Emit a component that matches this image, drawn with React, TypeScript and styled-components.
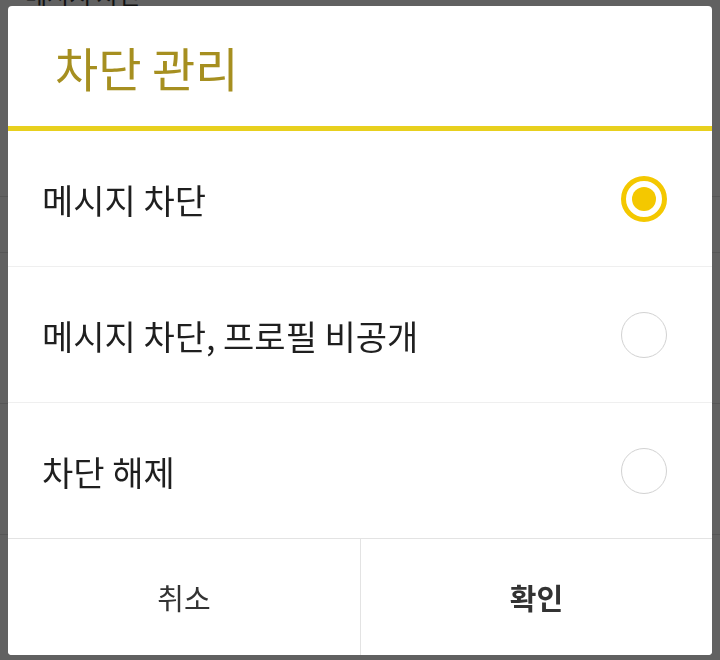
import React, { useState } from "react";
import styled, { createGlobalStyle } from "styled-components";

const GlobalStyle = createGlobalStyle`
  html, body {
    margin: 0;
    padding: 0;
    background: #ffffff;
    font-family: "Noto Sans CJK KR", "Noto Sans", sans-serif;
  }
  * {
    box-sizing: border-box;
  }
`;

const options = ["메시지 차단", "메시지 차단, 프로필 비공개", "차단 해제"];
const bgRows = [191, 56, 151, 131, 140];

const Page = styled.div`
  width: 720px;
  height: 660px;
  overflow: hidden;
  background: #ffffff;
`;

const BgTitle = styled.div`
  margin-top: -18px;
  padding-left: 25px;
  font-size: 24px;
  line-height: 24px;
  color: #333333;
`;

const BgRow = styled.div<{ $h: number }>`
  height: ${(p) => p.$h}px;
  border-bottom: 1px solid #e2e2e2;
`;

const Overlay = styled.div`
  position: fixed;
  inset: 0;
  background: rgba(0, 0, 0, 0.62);
  padding: 6px 8px 5px 8px;
  display: flex;
  justify-content: center;
`;

const Dialog = styled.div`
  width: 704px;
  height: 649px;
  background: #ffffff;
  border-radius: 4px;
  display: flex;
  flex-direction: column;
  overflow: hidden;
`;

const Header = styled.div`
  height: 125px;
  flex-shrink: 0;
  display: flex;
  align-items: center;
  padding-left: 47px;
  border-bottom: 5px solid #e8d01e;
`;

const Title = styled.h1`
  margin: 0;
  font-size: 47px;
  font-weight: 400;
  color: #a68f20;
  letter-spacing: 0;
`;

const OptionRow = styled.div<{ $last?: boolean }>`
  height: 136px;
  flex-shrink: 0;
  display: flex;
  align-items: center;
  justify-content: space-between;
  padding: 0 45px 0 34px;
  border-bottom: 1px solid ${(p) => (p.$last ? "#e3e3e3" : "#efefef")};
  cursor: pointer;
`;

const OptionLabel = styled.span`
  font-size: 34px;
  font-weight: 400;
  color: #1f1f1f;
  padding-top: 2px;
`;

const Radio = styled.div<{ $checked: boolean }>`
  width: 46px;
  height: 46px;
  border-radius: 50%;
  border: ${(p) => (p.$checked ? "5px solid #f4c800" : "1px solid #d2d2d2")};
  display: flex;
  align-items: center;
  justify-content: center;
`;

const Dot = styled.div`
  width: 24px;
  height: 24px;
  border-radius: 50%;
  background: #f4c800;
`;

const Footer = styled.div`
  flex: 1;
  display: grid;
  grid-template-columns: 1fr 1fr;
`;

const FooterButton = styled.button<{ $primary?: boolean }>`
  border: none;
  background: #ffffff;
  font-family: inherit;
  font-size: 29px;
  font-weight: ${(p) => (p.$primary ? 700 : 400)};
  color: #333333;
  padding: 0;
  cursor: pointer;
  & + & {
    border-left: 1px solid #e3e3e3;
  }
`;

export default function App() {
  const [selected, setSelected] = useState(0);

  return (
    <>
      <GlobalStyle />
      <Page>
        <BgTitle>메시지 차단</BgTitle>
        {bgRows.map((h, i) => (
          <BgRow key={i} $h={h} />
        ))}
      </Page>
      <Overlay>
        <Dialog>
          <Header>
            <Title>차단 관리</Title>
          </Header>
          {options.map((label, i) => (
            <OptionRow
              key={label}
              $last={i === options.length - 1}
              onClick={() => setSelected(i)}
            >
              <OptionLabel>{label}</OptionLabel>
              <Radio $checked={selected === i}>{selected === i && <Dot />}</Radio>
            </OptionRow>
          ))}
          <Footer>
            <FooterButton>취소</FooterButton>
            <FooterButton $primary>확인</FooterButton>
          </Footer>
        </Dialog>
      </Overlay>
    </>
  );
}
